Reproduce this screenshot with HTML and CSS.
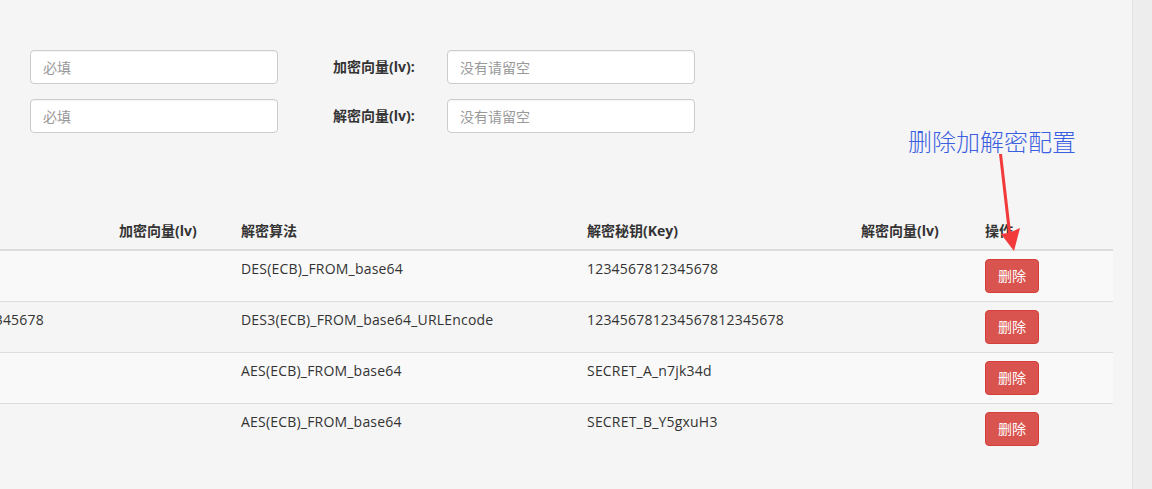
FILE: index.html
```html
<!DOCTYPE html>
<html lang="zh-CN">
<head>
<meta charset="utf-8">
<title>加解密配置</title>
<link rel="stylesheet" href="styles.css">
</head>
<body>
<div class="page">
  <main class="main">
    <form class="config-form">
      <div class="form-row">
        <input class="form-control" type="text" placeholder="必填">
        <label class="form-label">加密向量(lv):</label>
        <input class="form-control" type="text" placeholder="没有请留空">
      </div>
      <div class="form-row">
        <input class="form-control" type="text" placeholder="必填">
        <label class="form-label">解密向量(lv):</label>
        <input class="form-control" type="text" placeholder="没有请留空">
      </div>
    </form>

    <div class="table-wrap">
      <table class="table">
        <colgroup>
          <col class="c-enckey">
          <col class="c-enciv">
          <col class="c-decalg">
          <col class="c-deckey">
          <col class="c-deciv">
          <col class="c-op">
        </colgroup>
        <thead>
          <tr>
            <th>加密秘钥(Key)</th>
            <th>加密向量(lv)</th>
            <th>解密算法</th>
            <th>解密秘钥(Key)</th>
            <th>解密向量(lv)</th>
            <th>操作</th>
          </tr>
        </thead>
        <tbody>
          <tr>
            <td>1234567812345678</td>
            <td></td>
            <td>DES(ECB)_FROM_base64</td>
            <td>1234567812345678</td>
            <td></td>
            <td><button class="btn-danger" type="button">删除</button></td>
          </tr>
          <tr>
            <td>123456781234567812345678</td>
            <td></td>
            <td>DES3(ECB)_FROM_base64_URLEncode</td>
            <td>123456781234567812345678</td>
            <td></td>
            <td><button class="btn-danger" type="button">删除</button></td>
          </tr>
          <tr>
            <td>SECRET_A_n7jk34d</td>
            <td></td>
            <td>AES(ECB)_FROM_base64</td>
            <td>SECRET_A_n7jk34d</td>
            <td></td>
            <td><button class="btn-danger" type="button">删除</button></td>
          </tr>
          <tr>
            <td>SECRET_B_Y5gxuH3</td>
            <td></td>
            <td>AES(ECB)_FROM_base64</td>
            <td>SECRET_B_Y5gxuH3</td>
            <td></td>
            <td><button class="btn-danger" type="button">删除</button></td>
          </tr>
        </tbody>
      </table>
    </div>

    <div class="annotation">删除加解密配置</div>
    <svg class="arrow" width="30" height="100" viewBox="0 0 30 100" aria-hidden="true">
      <polygon points="4,0 7,0 16,78 25,74 19,97 6,80 13,79" fill="#f23a3a"/>
    </svg>
  </main>
  <div class="scrollbar"></div>
</div>
</body>
</html>
```

FILE: styles.css
```css
* {
  box-sizing: border-box;
}

html, body {
  margin: 0;
  padding: 0;
  height: 100%;
  overflow: hidden;
}

body {
  background: #f5f5f5;
  color: #333;
  font-family: "Open Sans", "Noto Sans CJK SC", sans-serif;
  font-size: 14px;
  line-height: 20px;
}

.page {
  display: flex;
  height: 489px;
  width: 1152px;
}

.main {
  position: relative;
  width: 1132px;
  flex: none;
  overflow: hidden;
  padding-top: 50px;
}

.scrollbar {
  flex: none;
  width: 20px;
  background: #ededed;
  border-left: 1px solid #e2e2e2;
}

.config-form {
  margin: 0 0 0 30px;
}

.form-row {
  display: flex;
  align-items: center;
  margin-bottom: 15px;
}

.form-control {
  width: 248px;
  height: 34px;
  padding: 6px 12px;
  border: 1px solid #ccc;
  border-radius: 4px;
  background: #fff;
  font-family: "Open Sans", "Noto Sans CJK SC", sans-serif;
  font-size: 14px;
  color: #555;
  box-shadow: inset 0 1px 1px rgba(0, 0, 0, 0.04);
}

.form-control::placeholder {
  color: #999;
}

.form-label {
  width: 114px;
  margin-left: 55px;
  font-weight: bold;
  line-height: 34px;
  color: #333;
}

.table-wrap {
  margin-top: 80px;
}

.table {
  margin-left: -161px;
  border-collapse: collapse;
  table-layout: fixed;
  width: 1274px;
}

.c-enckey { width: 272px; }
.c-enciv { width: 122px; }
.c-decalg { width: 346px; }
.c-deckey { width: 274px; }
.c-deciv { width: 124px; }
.c-op { width: 136px; }

.table th {
  padding: 8px;
  text-align: left;
  font-weight: bold;
  vertical-align: bottom;
  border-bottom: 2px solid #ddd;
  white-space: nowrap;
}

.table td {
  padding: 8px;
  vertical-align: top;
  border-top: 1px solid #ddd;
  white-space: nowrap;
  height: 51px;
  letter-spacing: 0.2px;
}

.table tbody tr:nth-child(odd) {
  background: #f9f9f9;
}

.btn-danger {
  display: block;
  width: 54px;
  height: 34px;
  padding: 6px 0;
  border: 1px solid #d43f3a;
  border-radius: 4px;
  background: #d9534f;
  color: #fff;
  font-family: "Open Sans", "Noto Sans CJK SC", sans-serif;
  font-size: 14px;
  line-height: 20px;
  letter-spacing: 0;
  text-align: center;
  cursor: pointer;
}

.annotation {
  position: absolute;
  left: 908px;
  top: 126px;
  font-family: "Noto Sans CJK SC", sans-serif;
  font-weight: 300;
  font-size: 24px;
  line-height: 30px;
  color: #3a5fe0;
  white-space: nowrap;
}

.arrow {
  position: absolute;
  left: 995px;
  top: 154px;
}
```
